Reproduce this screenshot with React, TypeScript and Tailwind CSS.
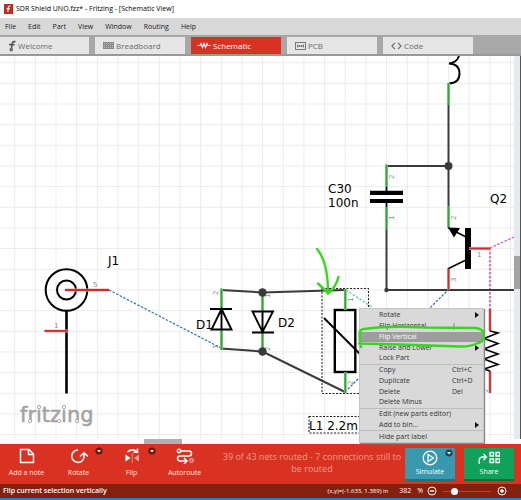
import { useState } from "react";
import type { ReactNode } from "react";

const MENUS = ["File", "Edit", "Part", "View", "Window", "Routing", "Help"];

const GREY_ICON = "#6f6f6f";

function FritzingMark() {
  return (
    <svg viewBox="0 0 8 12" className="h-3 w-2" fill="none" stroke="#555" strokeWidth={1.6}>
      <path d="M7.5 1.6H5.8Q4.4 1.6 4.2 3.4L3.4 8.8" />
      <path d="M1 4.6h5.6" />
      <circle cx={3.2} cy={9.8} r={1.1} strokeWidth={1.2} />
    </svg>
  );
}

function BreadboardMark() {
  return (
    <svg viewBox="0 0 11 7" className="h-[7px] w-[11px]">
      <rect width={11} height={7} fill="#8a8a8a" />
      <path d="M1 1.5h9M1 3.5h9M1 5.5h9" stroke="#b9b9b9" strokeDasharray="1 1" />
    </svg>
  );
}

function SchematicMark() {
  return (
    <svg viewBox="0 0 14 7" className="h-[7px] w-[14px]" fill="none" stroke="#fff" strokeWidth={1.1}>
      <path d="M0.5 3.5H3l1-2 1.5 4L7 1.5l1.5 4L10 1.5l1 2h2.5" />
    </svg>
  );
}

function PcbMark() {
  return (
    <svg viewBox="0 0 11 8" className="h-2 w-[11px]" fill="none" stroke={GREY_ICON} strokeWidth={0.9}>
      <rect x={0.5} y={0.5} width={10} height={7} />
      <path d="M2.5 2.5v3M8.5 2.5v3M2.5 4h6M4.5 3v2M6.5 3v2" />
    </svg>
  );
}

function CodeMark() {
  return (
    <svg viewBox="0 0 11 8" className="h-2 w-[11px]" fill="none" stroke={GREY_ICON} strokeWidth={1.2}>
      <path d="M4 0.8L0.9 4 4 7.2M7 0.8L10.1 4 7 7.2" />
    </svg>
  );
}

const TABS: { name: string; icon: ReactNode; pad: string; width: string }[] = [
  { name: "Welcome", icon: <FritzingMark />, pad: "pl-2 gap-[2px]", width: "w-[89px]" },
  { name: "Breadboard", icon: <BreadboardMark />, pad: "pl-2 gap-[2px]", width: "w-[90px]" },
  { name: "Schematic", icon: <SchematicMark />, pad: "pl-[6px] gap-[2px]", width: "w-[90px]" },
  { name: "PCB", icon: <PcbMark />, pad: "pl-2 gap-[2px]", width: "w-[90px]" },
  { name: "Code", icon: <CodeMark />, pad: "pl-2 gap-[2px]", width: "w-[90px]" },
];

interface MenuEntry {
  label: string;
  shortcut?: string;
  submenu?: boolean;
  divider?: boolean;
  active?: boolean;
}

const CONTEXT_MENU: MenuEntry[] = [
  { label: "Rotate", submenu: true },
  { label: "Flip Horizontal", shortcut: "|" },
  { label: "Flip Vertical", active: true },
  { label: "Raise and Lower", submenu: true },
  { label: "Lock Part" },
  { label: "Copy", shortcut: "Ctrl+C", divider: true },
  { label: "Duplicate", shortcut: "Ctrl+D" },
  { label: "Delete", shortcut: "Del" },
  { label: "Delete Minus" },
  { label: "Edit (new parts editor)", divider: true },
  { label: "Add to bin...", submenu: true },
  { label: "Hide part label", divider: true },
];

function ContextMenu() {
  return (
    <div
      role="menu"
      className="absolute left-[359px] top-[252px] flex h-[135px] w-[125px] flex-col border border-[#c4c4c4] bg-[#d9d9d9] pt-px shadow-[1px_1px_1px_#888]"
    >
      {CONTEXT_MENU.map((item) => (
        <button
          key={item.label}
          role="menuitem"
          className={`flex min-h-0 flex-1 items-center pl-[19px] pr-1 text-left text-[7px] leading-[10px] ${
            item.active ? "bg-[#9d9d9d] text-white" : "text-[#333]"
          } ${item.divider ? "border-t border-[#bdbdbd]" : ""}`}
        >
          <span className="flex-1 whitespace-nowrap">{item.label}</span>
          {item.shortcut && <span className="w-[27px]">{item.shortcut}</span>}
          {item.submenu && (
            <svg viewBox="0 0 4 6" className="h-[6px] w-1">
              <path d="M0 0l4 3-4 3z" fill="#111" />
            </svg>
          )}
        </button>
      ))}
    </div>
  );
}

// Pin in a connected (green) or open (red) state
function Pin({ d, color }: { d: string; color: "green" | "red" }) {
  const glow = color === "green" ? "#9be09b" : "#f3a8a8";
  const core = color === "green" ? "#2fa336" : "#cf2a2c";
  return (
    <g fill="none">
      <path d={d} stroke={glow} strokeWidth={3} />
      <path d={d} stroke={core} strokeWidth={1.8} />
    </g>
  );
}

function PinNumber({ x, y, n, up }: { x: number; y: number; n: string; up?: boolean }) {
  return (
    <text x={x} y={y} fontSize={7} fill="#8c8c8c" transform={up ? `rotate(-90 ${x} ${y})` : undefined}>
      {n}
    </text>
  );
}

function Schematic() {
  return (
    <svg className="block h-full w-full" fontFamily='"DejaVu Sans", sans-serif'>
      <defs>
        <pattern id="grid" x={14.2} y={0.3} width={20.66} height={20.66} patternUnits="userSpaceOnUse">
          <path d="M0.5 0V20.66M0 6.5H20.66" stroke="#ebebeb" fill="none" />
        </pattern>
      </defs>
      <rect width="100%" height="100%" fill="#fff" />
      <rect width="100%" height="100%" fill="url(#grid)" />

      <g transform="translate(0 -56)">
        {/* ratsnest */}
        <g fill="none" strokeWidth={1.2} strokeDasharray="2.5 1.5">
          <path d="M109 290L221 348" stroke="#2d74b8" />
          <path d="M345 392L448 290" stroke="#2b62c9" />
          <path d="M346 290L372 307M480 385L490 393" stroke="#3fd0b0" />
          <path d="M490 248L514 237" stroke="#d455c0" />
          <path d="M490 248V310" stroke="#d455c0" strokeWidth={1.6} />
        </g>

        {/* wires */}
        <g fill="none" stroke="#3a3a3a" strokeWidth={2}>
          <path d="M221 290L262.5 292.5L345 290" />
          <path d="M221 348.5L262.5 351.5L345 392" />
          <path d="M448.5 103V208M448.5 166H386.5M386.5 228V290H514" />
        </g>

        {/* J1 */}
        <g fill="none" stroke="#000" strokeWidth={2}>
          <circle cx={66.5} cy={290} r={20.8} />
          <circle cx={66.5} cy={290} r={9.5} />
          <path d="M66.5 311V393.5" strokeWidth={2.6} />
        </g>
        <Pin d="M65 290H109" color="red" />
        <Pin d="M44.5 331H68" color="red" />
        <PinNumber x={93} y={287} n="5" />
        <PinNumber x={54} y={328} n="1" />

        {/* D1, D2 */}
        <Pin d="M221.5 288.5V309M221.5 329V350" color="green" />
        <Pin d="M262.5 293V312M262.5 332V351" color="green" />
        <g fill="none" stroke="#000" strokeWidth={1.9}>
          <path d="M210 309h22M221.5 309L211.5 329.5H231.5ZM221.5 309v20" />
          <path d="M252 332.5h22M252.5 311.5H273L262.5 332ZM262.5 311.5v20" />
        </g>
        <PinNumber x={218} y={295} n="2" up />
        <PinNumber x={218} y={349} n="1" up />
        <PinNumber x={270} y={298} n="1" up />
        <PinNumber x={270} y={351} n="2" up />

        {/* L1 */}
        <rect x={334.8} y={310} width={20.5} height={62} fill="none" stroke="#000" strokeWidth={2.4} />
        <path d="M324 318L366 360" stroke="#000" strokeWidth={1.9} />
        <Pin d="M345.3 289V310M345.3 372V393" color="green" />
        <PinNumber x={353} y={302} n="1" up />
        <PinNumber x={353} y={385} n="2" up />
        <g fill="none" stroke="#222" strokeWidth={1.1} strokeDasharray="2 1.5">
          <rect x={322} y={288.5} width={46.5} height={105} />
          <rect x={309} y={416.5} width={70} height={16.5} />
        </g>

        {/* inductor tail above the junction */}
        <path
          d="M459 56Q457 62.5 449 63.5Q459.5 64 459.5 73.5Q459.5 83 449 83.5"
          fill="none"
          stroke="#000"
          strokeWidth={1.9}
        />
        <Pin d="M448.5 83V105" color="green" />

        {/* C30 */}
        <Pin d="M386.5 164.5V187M386.5 207V230" color="green" />
        <path d="M386.5 187v5M386.5 202v5" stroke="#000" strokeWidth={1.8} />
        <path d="M370 190.8h33v4.2h-33zM370 199h33v4h-33z" fill="#000" />
        <PinNumber x={394} y={179} n="2" up />
        <PinNumber x={394} y={220} n="1" up />

        {/* Q2 */}
        <Pin d="M448.5 206V228" color="green" />
        <Pin d="M448.5 268V290" color="red" />
        <path d="M465 228h6v41h-6z" fill="#000" />
        <path d="M448.5 228L466 237M448.5 268.5L466 260" stroke="#000" strokeWidth={1.5} />
        <path d="M448 227.5L460 228L454 237.5Z" fill="#000" />
        <Pin d="M469 248.5H490.5" color="red" />
        <PinNumber x={456} y={220} n="2" up />
        <PinNumber x={456} y={282} n="3" up />
        <PinNumber x={477} y={257} n="1" />

        {/* resistor behind the menu */}
        <Pin d="M490 309V331M490 371V393" color="red" />
        <path
          d="M490 331L498 333L484 338.5L498 343.5L484 349L498 354L484 359L498 364.5L484 369L490 371"
          fill="none"
          stroke="#000"
          strokeWidth={1.6}
        />

        <g fill="#3a3a3a">
          <circle cx={262.5} cy={292.5} r={4.2} />
          <circle cx={262.5} cy={351.5} r={4.2} />
          <circle cx={448.5} cy={166} r={4} />
          <circle cx={386.5} cy={290} r={2.2} />
        </g>

        <g fontSize={12} fill="#000">
          <text x={108} y={265}>J1</text>
          <text x={196} y={329}>D1</text>
          <text x={278} y={327}>D2</text>
          <text x={328} y={193}>C30</text>
          <text x={328} y={207}>100n</text>
          <text x={490} y={203}>Q2</text>
          <text x={309} y={430}>L1 2.2m</text>
        </g>

        {/* watermark */}
        <text x={20} y={422} fontSize={21} fill="#a3a3a3" stroke="#a3a3a3" strokeWidth={0.5}>
          fritzing
        </text>
        <g fill="#fff" stroke="#a3a3a3" strokeWidth={0.9}>
          <circle cx={39} cy={407} r={1.6} />
          <circle cx={64} cy={407} r={1.6} />
          <circle cx={30} cy={421} r={1.6} />
          <circle cx={59} cy={421} r={1.6} />
          <circle cx={77} cy={421} r={1.6} />
        </g>
      </g>
    </svg>
  );
}

function Annotations() {
  return (
    <svg className="pointer-events-none absolute inset-0 h-full w-full" fill="none" stroke="#35d81c" strokeLinecap="round">
      <g transform="translate(0 -56)" strokeWidth={2.4}>
        <path d="M317 249Q328 262 328 292" />
        <path d="M318 283.5Q322 287 328 293.5Q336 287 338.5 277" />
        <path d="M361 347Q359 339 359.5 333Q360 329.5 364 329Q390 325.5 425 327.5L476 328Q484 329 483.5 335Q485 341 478 343Q470 347 460 346.5L400 344.5L359 343.5" />
      </g>
    </svg>
  );
}

function Caret({ color }: { color: string }) {
  return (
    <svg viewBox="0 0 8 8" className="h-2 w-2">
      <circle cx={4} cy={4} r={3.6} fill={color} />
      <path d="M2 3h4L4 5.6z" fill="#fff" />
    </svg>
  );
}

function ToolButton({ label, caret, children }: { label: string; caret?: boolean; children: ReactNode }) {
  return (
    <button className="relative flex w-[53px] shrink-0 flex-col items-center pt-1">
      <svg viewBox="0 0 18 16" className="h-4 w-[18px]" fill="none" stroke="#fff" strokeWidth={1.5}>
        {children}
      </svg>
      {caret && (
        <span className="absolute right-[2px] top-[3px]">
          <Caret color="#6e1408" />
        </span>
      )}
      <span className="mt-1 whitespace-nowrap text-[7px] leading-[10px] text-[#ffe4de]">{label}</span>
    </button>
  );
}

export default function App() {
  const [zoom, setZoom] = useState(382);

  return (
    <div className="flex h-screen flex-col overflow-hidden bg-white font-['Open_Sans','Noto_Sans',sans-serif]">
      <header className="flex h-[18px] shrink-0 items-center gap-[3px] pl-1">
        <svg viewBox="0 0 9 10" className="h-[10px] w-[9px]">
          <rect width={9} height={10} fill="#c8281c" />
          <path d="M6.5 2H5.5Q4.4 2 4.3 3.4L3.8 8M2.6 4.6h3.2" stroke="#fff" strokeWidth={1.2} fill="none" />
        </svg>
        <h1 className="whitespace-nowrap text-[7px] leading-[10px] text-black">
          SDR Shield UNO.fzz* - Fritzing - [Schematic View]
        </h1>
      </header>

      <nav className="flex h-[17px] shrink-0 items-center gap-3 bg-[#d8d8d8] pl-[5px] text-[7px] leading-[10px] text-[#222]">
        {MENUS.map((m) => (
          <button key={m}>{m}</button>
        ))}
      </nav>

      <div className="flex h-[21px] shrink-0 items-end gap-[6px] border-b-2 border-[#999] bg-[#a8a8a8]">
        {TABS.map((tab) => (
          <button
            key={tab.name}
            className={`flex h-[17px] shrink-0 items-center text-[8px] leading-[10px] ${tab.pad} ${tab.width} ${
              tab.name === "Schematic" ? "bg-[#d93223] text-white" : "bg-[#e6e6e6] text-[#6a6a6a]"
            }`}
          >
            {tab.icon}
            {tab.name}
          </button>
        ))}
      </div>

      <main className="relative flex min-h-0 flex-1 flex-col">
        <div className="flex min-h-0 flex-1">
          <div className="min-w-0 flex-1">
            <Schematic />
          </div>
          <div className="w-[7px] border-r border-[#555] bg-[#e3ebf0] pt-[200px]">
            <div className="h-[33px] bg-[#a3a3a3]" />
          </div>
        </div>
        <div className="h-[5px] bg-[#fafafa] pl-36">
          <div className="h-full w-[38px] bg-[#b0b0b0]" />
        </div>
        <ContextMenu />
        <Annotations />
      </main>

      <div className="flex h-10 shrink-0 bg-[#d93223] pr-[7px]">
        <ToolButton label="Add a note">
          <path d="M2.5 1.5H11l4.5 4.5v8.5H2.5zM10.5 1.5v5h5" />
        </ToolButton>
        <div className="-ml-px flex">
          <ToolButton label="Rotate" caret>
            <path d="M8 2A6.2 6.2 0 1 0 14 9.5V5.5M10 8.5l4-3.8 4 3.8" />
          </ToolButton>
          <ToolButton label="Flip" caret>
            <path d="M4.5 4Q9 0 14 3.5M14.5 0.5v3.8H10.5" />
            <path d="M2.5 6.5l5 3.5-5 3.5z" fill="#fff" stroke="none" />
            <path d="M16 6.5L11 10l5 3.5z" fill="#f0a298" stroke="none" />
            <path d="M9.2 5v10" stroke="#f0a298" strokeWidth={0.8} />
          </ToolButton>
          <ToolButton label="Autoroute">
            <circle cx={3} cy={3} r={1.7} />
            <path d="M4.7 3H13a2.5 2.5 0 0 1 0 5H4a2.5 2.5 0 0 0 0 5h7M8 10l3 3-3 3" />
            <circle cx={15.5} cy={12.5} r={1.7} stroke="#f0a298" />
          </ToolButton>
        </div>

        <p className="flex-1 whitespace-nowrap pl-2 pt-[7px] text-center text-[9px] leading-[12px] text-[#f59a8c]">
          39 of 43 nets routed - 7 connections still to
          <br />
          be routed
        </p>

        <div className="flex items-start gap-[9px] pt-1">
          <button className="relative flex h-[33px] w-[50px] flex-col items-center border-b-2 border-[#1d7286] bg-[#3798ae] pt-[2px]">
            <svg viewBox="0 0 16 16" className="h-4 w-4" fill="none" stroke="#fff" strokeWidth={1.3}>
              <circle cx={8} cy={8} r={6.8} />
              <path d="M6 4.5v7l5.5-3.5z" />
            </svg>
            <span className="text-[7px] leading-[12px] text-white">Simulate</span>
            <span className="absolute right-[2px] top-px">
              <Caret color="#174a5a" />
            </span>
          </button>
          <button className="flex h-[33px] w-[50px] flex-col items-center border-b-2 border-[#0b6e3c] bg-[#10a25a] pt-[2px]">
            <svg viewBox="0 0 22 16" className="h-4 w-[22px]" fill="none" stroke="#fff" strokeWidth={1.3}>
              <path d="M1.2 14V10.5Q1.2 7 5 7H8M5.5 4l3 3-3 3" />
              <path d="M12 2.5h3.5V6H12zM18 2.5h3.5V6H18zM12 9h3.5v3.5H12zM18 9h3.5v3.5H18z" />
            </svg>
            <span className="text-[7px] leading-[12px] text-white">Share</span>
          </button>
        </div>
      </div>

      <footer className="flex h-[16px] shrink-0 items-center border-b-2 border-[#1787c8] bg-[#84200d] pl-[3px] pr-[14px] text-[6px] leading-[10px] text-white">
        <span className="flex-1 whitespace-nowrap text-[7px] font-semibold">Flip current selection vertically</span>
        <span className="whitespace-nowrap">(x,y)=(-1.633, 1.389) in</span>
        <label className="ml-[11px] flex items-center gap-1 text-[7px]">
          <input
            aria-label="Zoom level"
            className="w-[14px] bg-transparent text-[7px] text-white outline-none"
            value={zoom}
            onChange={(e) => setZoom(Number(e.target.value) || 0)}
          />
          %
        </label>
        <button aria-label="Zoom out" className="ml-1" onClick={() => setZoom(zoom - 10)}>
          <svg viewBox="0 0 10 10" className="h-[10px] w-[10px]" fill="none" stroke="#fff">
            <circle cx={5} cy={5} r={4} />
            <path d="M3 5h4" strokeWidth={1.4} />
          </svg>
        </button>
        <input
          type="range"
          aria-label="Zoom"
          min={10}
          max={2000}
          value={zoom}
          onChange={(e) => setZoom(Number(e.target.value))}
          className="mx-[6px] h-[1px] w-[48px] appearance-none bg-[#d93223] [&::-webkit-slider-thumb]:h-[7px] [&::-webkit-slider-thumb]:w-[7px] [&::-webkit-slider-thumb]:appearance-none [&::-webkit-slider-thumb]:rounded-full [&::-webkit-slider-thumb]:bg-white"
        />
        <button aria-label="Zoom in" onClick={() => setZoom(zoom + 10)}>
          <svg viewBox="0 0 10 10" className="h-[10px] w-[10px]" fill="none" stroke="#fff">
            <circle cx={5} cy={5} r={4} />
            <path d="M3 5h4M5 3v4" strokeWidth={1.4} />
          </svg>
        </button>
      </footer>
    </div>
  );
}
